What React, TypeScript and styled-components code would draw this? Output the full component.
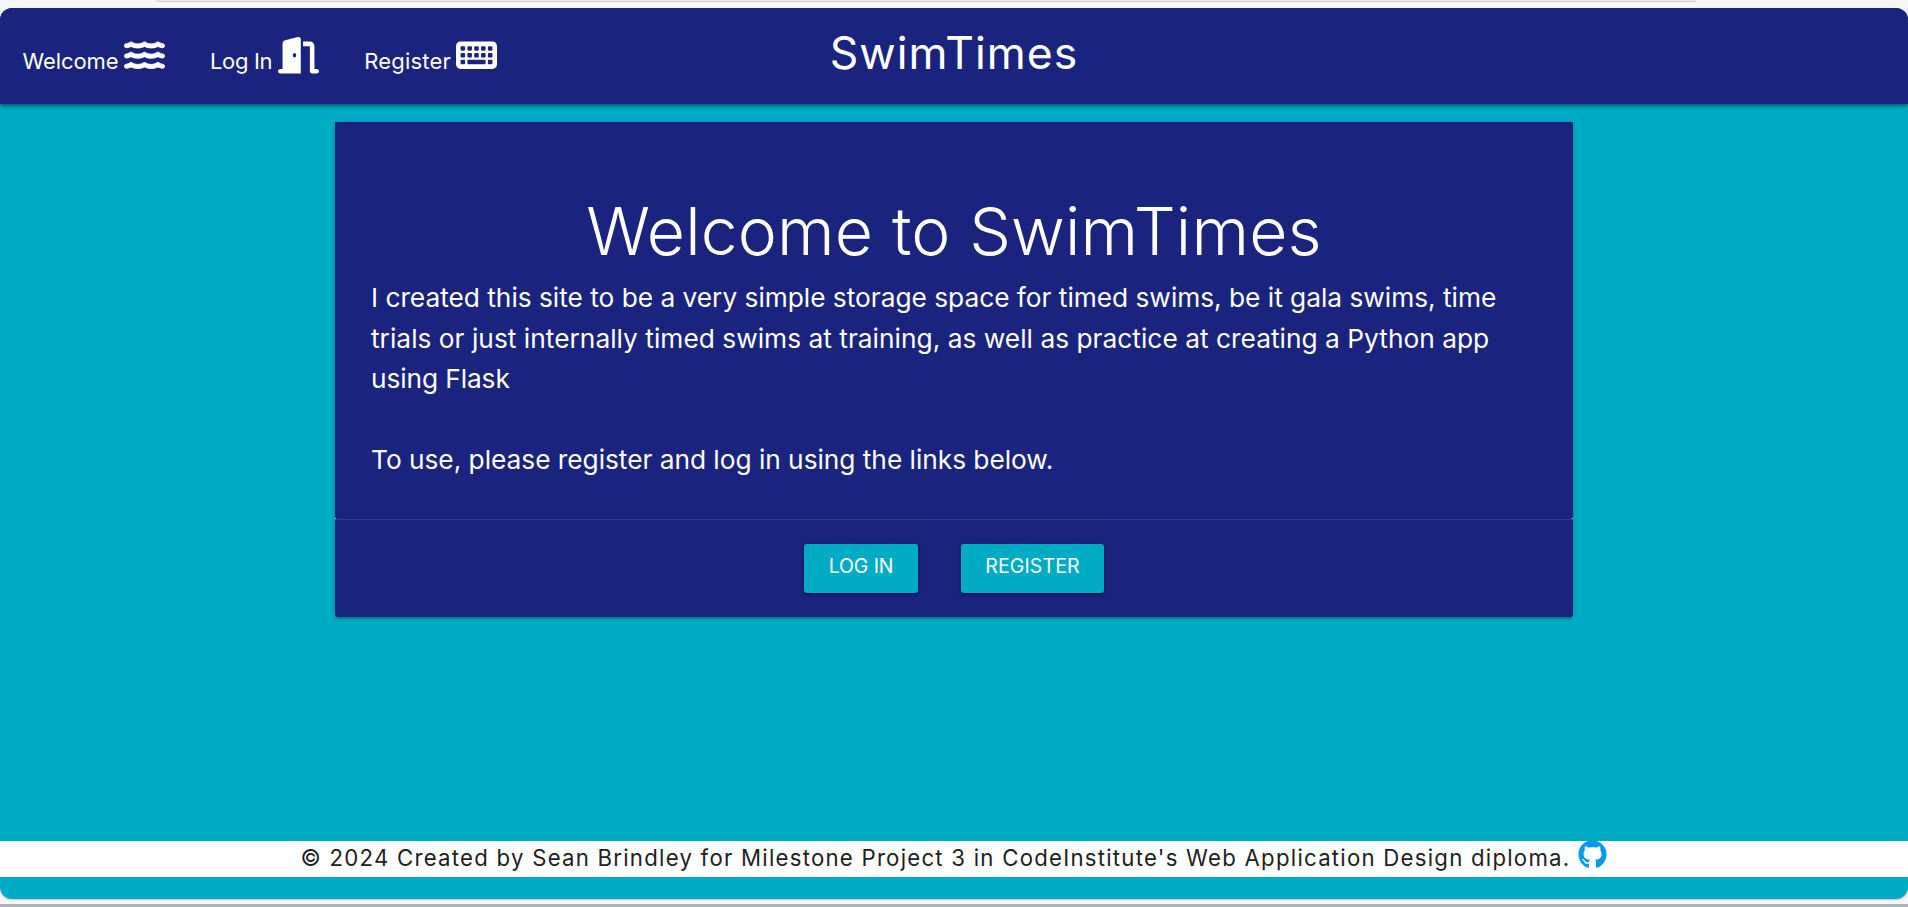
import React from "react";
import styled, { createGlobalStyle } from "styled-components";
import { FaDoorOpen, FaGithub, FaKeyboard } from "react-icons/fa6";

const navy = "#1a237e";
const teal = "#00acc4";
const depth =
  "0 2px 2px 0 rgba(0,0,0,.14), 0 3px 1px -2px rgba(0,0,0,.12), 0 1px 5px 0 rgba(0,0,0,.2)";
const navDepth =
  "0 2px 4px 0 rgba(0,0,0,.3), 0 3px 2px -2px rgba(0,0,0,.15), 0 1px 6px 0 rgba(0,0,0,.2)";

const GlobalStyle = createGlobalStyle`
  * { box-sizing: border-box; }
  html, body { margin: 0; padding: 0; overflow: hidden; }
  body {
    font-family: Inter, Roboto, sans-serif;
    color: #fff;
    background: #f7f7f8;
  }
  a { color: inherit; text-decoration: none; }
`;

const Window = styled.div`
  display: flex;
  flex-direction: column;
  height: 907px;
  border-bottom: 3px solid #b2b0bb;
  padding-bottom: 5px;
`;

const TopStrip = styled.div`
  flex: none;
  height: 8px;
  padding: 0 212px 0 156px;
`;

const AddressEdge = styled.div`
  height: 2px;
  background: #e9e9ea;
  border-bottom: 1px solid #cbcbcd;
  border-radius: 0 0 8px 8px;
`;

const Page = styled.div`
  flex: 1;
  display: flex;
  flex-direction: column;
  background: ${teal};
  border-radius: 12px;
  overflow: hidden;
  box-shadow: 0 1px 2px rgba(0, 0, 0, 0.2);
`;

const Nav = styled.nav`
  flex: none;
  display: grid;
  grid-template-columns: 1fr auto 1fr;
  align-items: center;
  height: 96px;
  background: ${navy};
  box-shadow: ${navDepth};
`;

const NavLinks = styled.div`
  display: flex;
  align-items: center;
  gap: 45px;
  padding: 0 0 1px 22.5px;
`;

const NavLink = styled.a<{ $width: number; $spacing: number }>`
  display: flex;
  align-items: center;
  width: ${(p) => p.$width}px;
  font-size: 22px;
  letter-spacing: ${(p) => p.$spacing}px;
  line-height: 28px;
  white-space: nowrap;
  justify-content: space-between;

  span { padding-top: 11px; }
  svg { flex: none; width: 41px; height: 36.5px; }
`;

const Brand = styled.a`
  font-size: 44.5px;
  line-height: 54px;
  letter-spacing: 1px;
  padding-bottom: 6px;
`;

const Main = styled.main`
  flex: 1;
  display: flex;
  flex-direction: column;
  align-items: center;
  padding-top: 18px;
`;

const Card = styled.section`
  width: 1238px;
  background: #fff;
  border-radius: 2px;
  box-shadow: ${depth};
`;

const CardContent = styled.div`
  height: 397px;
  padding: 72.5px 36px 0;
  background: ${navy};
  border-radius: 0 0 2px 2px;
`;

const Heading = styled.h1`
  margin: 0 0 11px;
  font-size: 66px;
  font-weight: 300;
  line-height: 72.6px;
  letter-spacing: 0.15px;
  text-align: center;
`;

const Copy = styled.p<{ $spacing?: number }>`
  margin: 0;
  min-height: 40.5px;
  font-size: 26.3px;
  line-height: 40.5px;
  letter-spacing: ${(p) => p.$spacing ?? -0.02}px;
  white-space: nowrap;
`;

const CardAction = styled.div`
  display: flex;
  justify-content: center;
  gap: 43px;
  height: 98px;
  padding-top: 24px;
  background: ${navy};
  border-top: 1px solid #353d8c;
  border-radius: 0 0 2px 2px;
`;

const Button = styled.a<{ $width: number; $spacing: number }>`
  width: ${(p) => p.$width}px;
  height: 49px;
  font-size: 19.5px;
  line-height: 44px;
  letter-spacing: ${(p) => p.$spacing}px;
  text-align: center;
  background: ${teal};
  border-radius: 3px;
  box-shadow: ${depth};
`;

const Footer = styled.footer`
  flex: none;
  display: flex;
  justify-content: center;
  gap: 8px;
  height: 36px;
  margin-bottom: 22px;
  background: #fff;
  color: #212121;
  font-size: 22.2px;
  line-height: 34px;
  letter-spacing: 1.24px;
  white-space: nowrap;

  svg { width: 29px; height: 29px; margin-top: -1px; color: #039be5; }
`;

const wave =
  "M549.8 237.5c-31.23-5.719-46.84-20.06-47.13-20.31C490.4 205 470.3 205.1 457.7 216.8c-1 .9375-25.14 23-73.73 23s-72.73-22.06-73.38-22.62C298.4 204.9 278.3 205.1 265.7 216.8c-1 .9375-25.14 23-73.73 23S119.3 217.8 118.6 217.2C106.4 204.9 86.35 205 73.74 216.9C73.09 217.4 57.48 231.8 26.24 237.5c-17.38 3.188-28.89 19.84-25.72 37.22c3.188 17.38 19.78 29.09 37.25 25.72C63.1 295.8 82.49 287.1 95.96 279.2c19.5 11.53 51.47 24.68 96.04 24.68c44.55 0 76.49-13.12 96-24.65c19.52 11.53 51.45 24.59 96 24.59c44.58 0 76.55-13.09 96.05-24.62c13.47 7.938 32.86 16.62 58.19 21.25c17.56 3.375 34.06-8.344 37.25-25.72C578.7 257.4 567.2 240.7 549.8 237.5z";

const WaterIcon = () => (
  <svg viewBox="0 0 576 512" fill="currentColor" stroke="currentColor" strokeWidth="14" aria-hidden="true">
    {[-144, 0, 144].map((y) => (
      <path key={y} d={wave} transform={`translate(4 ${y + 30}) scale(.985 .88)`} />
    ))}
  </svg>
);

export default function App() {
  return (
    <>
      <GlobalStyle />
      <Window>
        <TopStrip>
          <AddressEdge />
        </TopStrip>
        <Page>
          <Nav>
            <NavLinks>
              <NavLink href="#" $width={142.5} $spacing={-0.08}>
                <span>Welcome</span>
                <WaterIcon />
              </NavLink>
              <NavLink href="#" $width={109.2} $spacing={-0.35}>
                <span>Log In</span>
                <FaDoorOpen />
              </NavLink>
              <NavLink href="#" $width={133.3} $spacing={0.2}>
                <span>Register</span>
                <FaKeyboard />
              </NavLink>
            </NavLinks>
            <Brand href="#">SwimTimes</Brand>
          </Nav>
          <Main>
            <Card>
              <CardContent>
                <Heading>Welcome to SwimTimes</Heading>
                <Copy>I created this site to be a very simple storage space for timed swims, be it gala swims, time</Copy>
                <Copy $spacing={0.02}>trials or just internally timed swims at training, as well as practice at creating a Python app</Copy>
                <Copy $spacing={-0.1}>using Flask</Copy>
                <Copy />
                <Copy $spacing={-0.03}>To use, please register and log in using the links below.</Copy>
              </CardContent>
              <CardAction>
                <Button href="#" $width={114} $spacing={-0.1}>LOG IN</Button>
                <Button href="#" $width={143} $spacing={0.15}>REGISTER</Button>
              </CardAction>
            </Card>
          </Main>
          <Footer>
            <span>© 2024 Created by Sean Brindley for Milestone Project 3 in CodeInstitute's Web Application Design diploma.</span>
            <FaGithub />
          </Footer>
        </Page>
      </Window>
    </>
  );
}
